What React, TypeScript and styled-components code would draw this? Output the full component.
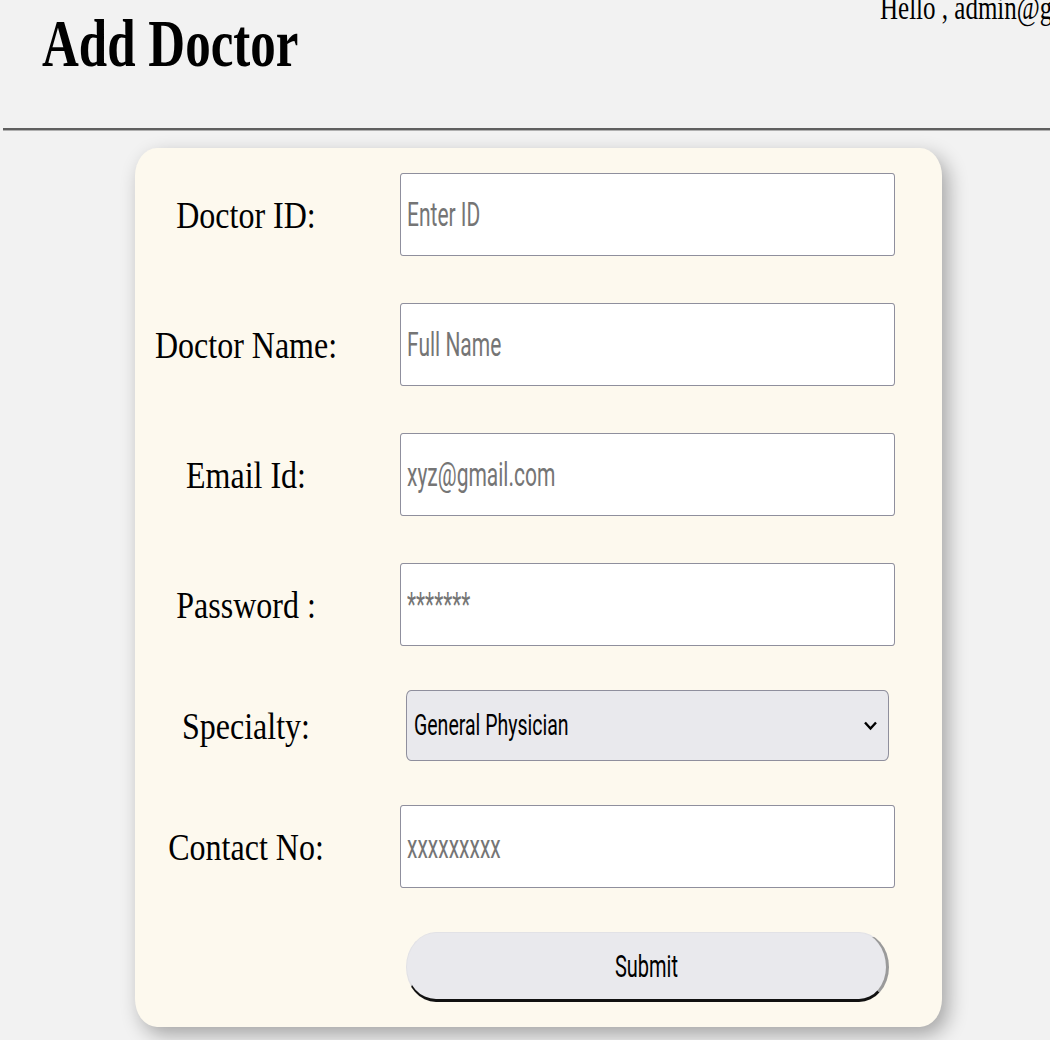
import * as React from 'react';
import styled, { createGlobalStyle } from 'styled-components';

const GlobalStyle = createGlobalStyle`
  html, body {
    margin: 0;
    padding: 0;
    overflow: hidden;
  }
  body {
    background: #f2f2f2;
    font-family: 'Liberation Serif', 'Times New Roman', serif;
    color: #000;
  }
`;

const Page = styled.div`
  width: 1050px;
  height: 1040px;
  overflow: hidden;
`;

const Header = styled.header`
  display: grid;
  grid-template-columns: 838px max-content;
  align-items: start;
  height: 128px;
  padding-left: 42px;
  box-sizing: border-box;
`;

const Title = styled.h1`
  margin: 19px 0 0;
  font-size: 51px;
  line-height: 51px;
  font-weight: bold;
  white-space: nowrap;
  transform: scaleY(1.32);
  justify-self: start;
`;

const Greeting = styled.div`
  margin-top: -5px;
  font-size: 25px;
  line-height: 25px;
  white-space: nowrap;
  transform: scaleY(1.35);
`;

const Divider = styled.hr`
  margin: 0 0 0 3px;
  height: 0;
  border: none;
  border-top: 2px solid #5f5f5f;
  border-bottom: 1px solid #b0b0b0;
`;

const Card = styled.form`
  margin: 17px 0 0 135px;
  width: 807px;
  box-sizing: border-box;
  padding: 25px 47px 25px 0;
  display: flex;
  flex-direction: column;
  background: #fdf9ee;
  border-radius: 22px / 28px;
  box-shadow: 6px 8px 20px rgba(0, 0, 0, 0.32);
`;

const Row = styled.div<{ $space: number }>`
  display: grid;
  grid-template-columns: 222px 1fr;
  column-gap: 43px;
  align-items: center;
  margin-top: ${p => p.$space}px;
`;

const Label = styled.label`
  display: block;
  text-align: center;
  font-size: 32px;
  line-height: 36px;
  white-space: nowrap;
  transform: scaleY(1.18);
`;

const FieldBox = styled.div`
  height: 83px;
  box-sizing: border-box;
  display: flex;
  align-items: center;
  padding: 0 6px;
  background: #fff;
  border: 1px solid #8f8f9d;
  border-radius: 3px / 4px;
`;

const Input = styled.input`
  flex: 1;
  min-width: 0;
  padding: 0;
  border: none;
  outline: none;
  background: transparent;
  font-family: Roboto, 'Liberation Sans', sans-serif;
  font-size: 21px;
  color: #000;
  transform: scaleY(1.55);

  &::placeholder {
    color: #757575;
  }
`;

const SelectBox = styled.div`
  margin: 0 6px;
  height: 71px;
  box-sizing: border-box;
  display: flex;
  align-items: center;
  padding: 0 10px 0 7px;
  background: #e9e9ed;
  border: 1px solid #8f8f9d;
  border-radius: 5px / 7px;
`;

const Select = styled.select`
  flex: 1;
  min-width: 0;
  appearance: none;
  padding: 0;
  border: none;
  outline: none;
  background: transparent;
  font-family: Roboto, 'Liberation Sans', sans-serif;
  font-size: 19.5px;
  color: #000;
  transform: scaleY(1.5);
`;

const SubmitButton = styled.button`
  margin: 0 6px;
  height: 70px;
  box-sizing: border-box;
  background: #e9e9ed;
  border-top: 1px solid #e2e2e6;
  border-left: 1px solid #e2e2e6;
  border-right: 3px solid #9a9a9a;
  border-bottom: 3px solid #111;
  border-radius: 30px / 35px;
  font-family: Roboto, 'Liberation Sans', sans-serif;
  font-size: 20px;
  color: #000;
  cursor: pointer;
`;

const ButtonText = styled.span`
  display: inline-block;
  transform: scaleY(1.55);
`;

const Chevron = () => (
  <svg width="15" height="11" viewBox="0 0 15 11">
    <polyline points="2,2.5 7.5,8.5 13,2.5" fill="none" stroke="#000" strokeWidth="2.4" />
  </svg>
);

const fields = [
  { id: 'docId', label: 'Doctor ID:', placeholder: 'Enter ID', type: 'text' },
  { id: 'docName', label: 'Doctor Name:', placeholder: 'Full Name', type: 'text' },
  { id: 'email', label: 'Email Id:', placeholder: 'xyz@gmail.com', type: 'email' },
  { id: 'password', label: 'Password :', placeholder: '*******', type: 'password' },
];

export default function App() {
  return (
    <Page>
      <GlobalStyle />
      <Header>
        <Title>Add Doctor</Title>
        <Greeting>Hello , admin@gmail.com</Greeting>
      </Header>
      <Divider />
      <Card onSubmit={e => e.preventDefault()}>
        {fields.map((f, i) => (
          <Row key={f.id} $space={i === 0 ? 0 : 47}>
            <Label htmlFor={f.id}>{f.label}</Label>
            <FieldBox>
              <Input id={f.id} type={f.type} placeholder={f.placeholder} />
            </FieldBox>
          </Row>
        ))}
        <Row $space={44}>
          <Label htmlFor="specialty">Specialty:</Label>
          <SelectBox>
            <Select id="specialty" defaultValue="General Physician">
              <option>General Physician</option>
              <option>Cardiologist</option>
              <option>Dermatologist</option>
              <option>Neurologist</option>
            </Select>
            <Chevron />
          </SelectBox>
        </Row>
        <Row $space={44}>
          <Label htmlFor="contact">Contact No:</Label>
          <FieldBox>
            <Input id="contact" type="tel" placeholder="xxxxxxxxx" />
          </FieldBox>
        </Row>
        <Row $space={44}>
          <span />
          <SubmitButton type="submit">
            <ButtonText>Submit</ButtonText>
          </SubmitButton>
        </Row>
      </Card>
    </Page>
  );
}
